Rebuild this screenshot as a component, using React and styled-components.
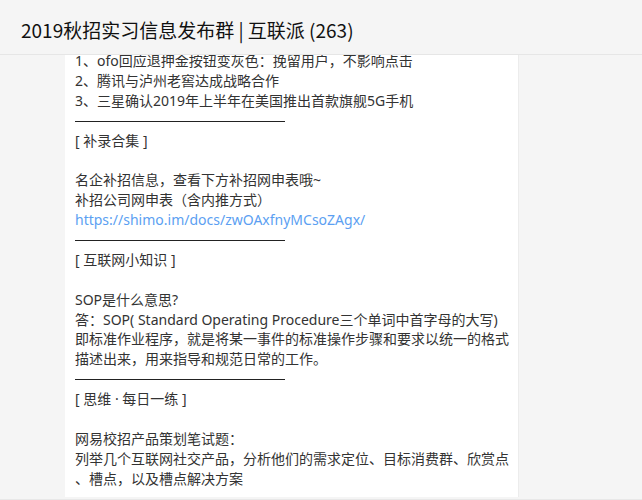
import React from 'react'
import styled, { createGlobalStyle } from 'styled-components'

const GlobalStyle = createGlobalStyle`
    html, body {
        margin: 0;
        padding: 0;
        background: #f5f5f5;
    }
    * {
        box-sizing: border-box;
    }
`

const lines = [
    { text: '1、ofo回应退押金按钮变灰色：挽留用户，不影响点击' },
    { text: '2、腾讯与泸州老窖达成战略合作' },
    { text: '3、三星确认2019年上半年在美国推出首款旗舰5G手机' },
    { rule: true },
    { text: '[ 补录合集 ]' },
    { text: '' },
    { text: '名企补招信息，查看下方补招网申表哦~' },
    { text: '补招公司网申表（含内推方式）' },
    { link: 'https://shimo.im/docs/zwOAxfnyMCsoZAgx/' },
    { rule: true },
    { text: '[ 互联网小知识 ]' },
    { text: '' },
    { text: 'SOP是什么意思?' },
    { text: '答：SOP( Standard Operating Procedure三个单词中首字母的大写)' },
    { text: '即标准作业程序，就是将某一事件的标准操作步骤和要求以统一的格式' },
    { text: '描述出来，用来指导和规范日常的工作。' },
    { rule: true },
    { text: '[ 思维 · 每日一练 ]' },
    { text: '' },
    { text: '网易校招产品策划笔试题：' },
    { text: '列举几个互联网社交产品，分析他们的需求定位、目标消费群、欣赏点' },
    { text: '、槽点，以及槽点解决方案' },
]

const App = () => {
    return (
        <Window>
            <GlobalStyle />
            <Header>
                <Title>2019秋招实习信息发布群 | 互联派 (263)</Title>
            </Header>
            <Messages>
                <Bubble>
                    {lines.map((line, i) => {
                        if (line.rule) return <Rule key={i} />
                        if (line.link) return <Line key={i}><Link href={line.link}>{line.link}</Link></Line>
                        return <Line key={i}>{line.text || '\u00a0'}</Line>
                    })}
                </Bubble>
            </Messages>
        </Window>
    )
}

const Window = styled.div`
    height: 500px;
    width: 642px;
    display: flex;
    flex-direction: column;
    background-color: #f5f5f5;
    overflow: hidden;
    font-family: "Noto Sans", "Noto Sans CJK SC", sans-serif;
`

const Header = styled.div`
    height: 55px;
    flex-shrink: 0;
    display: flex;
    align-items: center;
    padding: 4px 0 0 21px;
    border-bottom: 1px solid #e6e6e6;
    background-color: #f5f5f5;
`

const Title = styled.h1`
    margin: 0;
    font-family: "Noto Sans CJK SC", sans-serif;
    font-size: 19px;
    font-weight: 400;
    color: #111;
    white-space: nowrap;
`

const Messages = styled.div`
    flex: 1;
    overflow: hidden;
    padding-left: 65px;
    border-bottom: 1px solid #e8e8e8;
`

const Bubble = styled.div`
    width: 454px;
    margin-top: -4px;
    padding: 0 8px 8px 10px;
    background-color: #fff;
    border-right: 1px solid #ececec;
`

const Line = styled.div`
    font-size: 14px;
    line-height: 19.9px;
    height: 19.9px;
    color: #333;
    white-space: nowrap;
`

const Link = styled.a`
    color: #5c9ff2;
    text-decoration: none;
`

const Rule = styled.div`
    height: 19.9px;
    display: flex;
    align-items: center;

    &::after {
        content: '';
        width: 210px;
        height: 1px;
        margin-top: 1px;
        background-color: #222;
    }
`

export default App
